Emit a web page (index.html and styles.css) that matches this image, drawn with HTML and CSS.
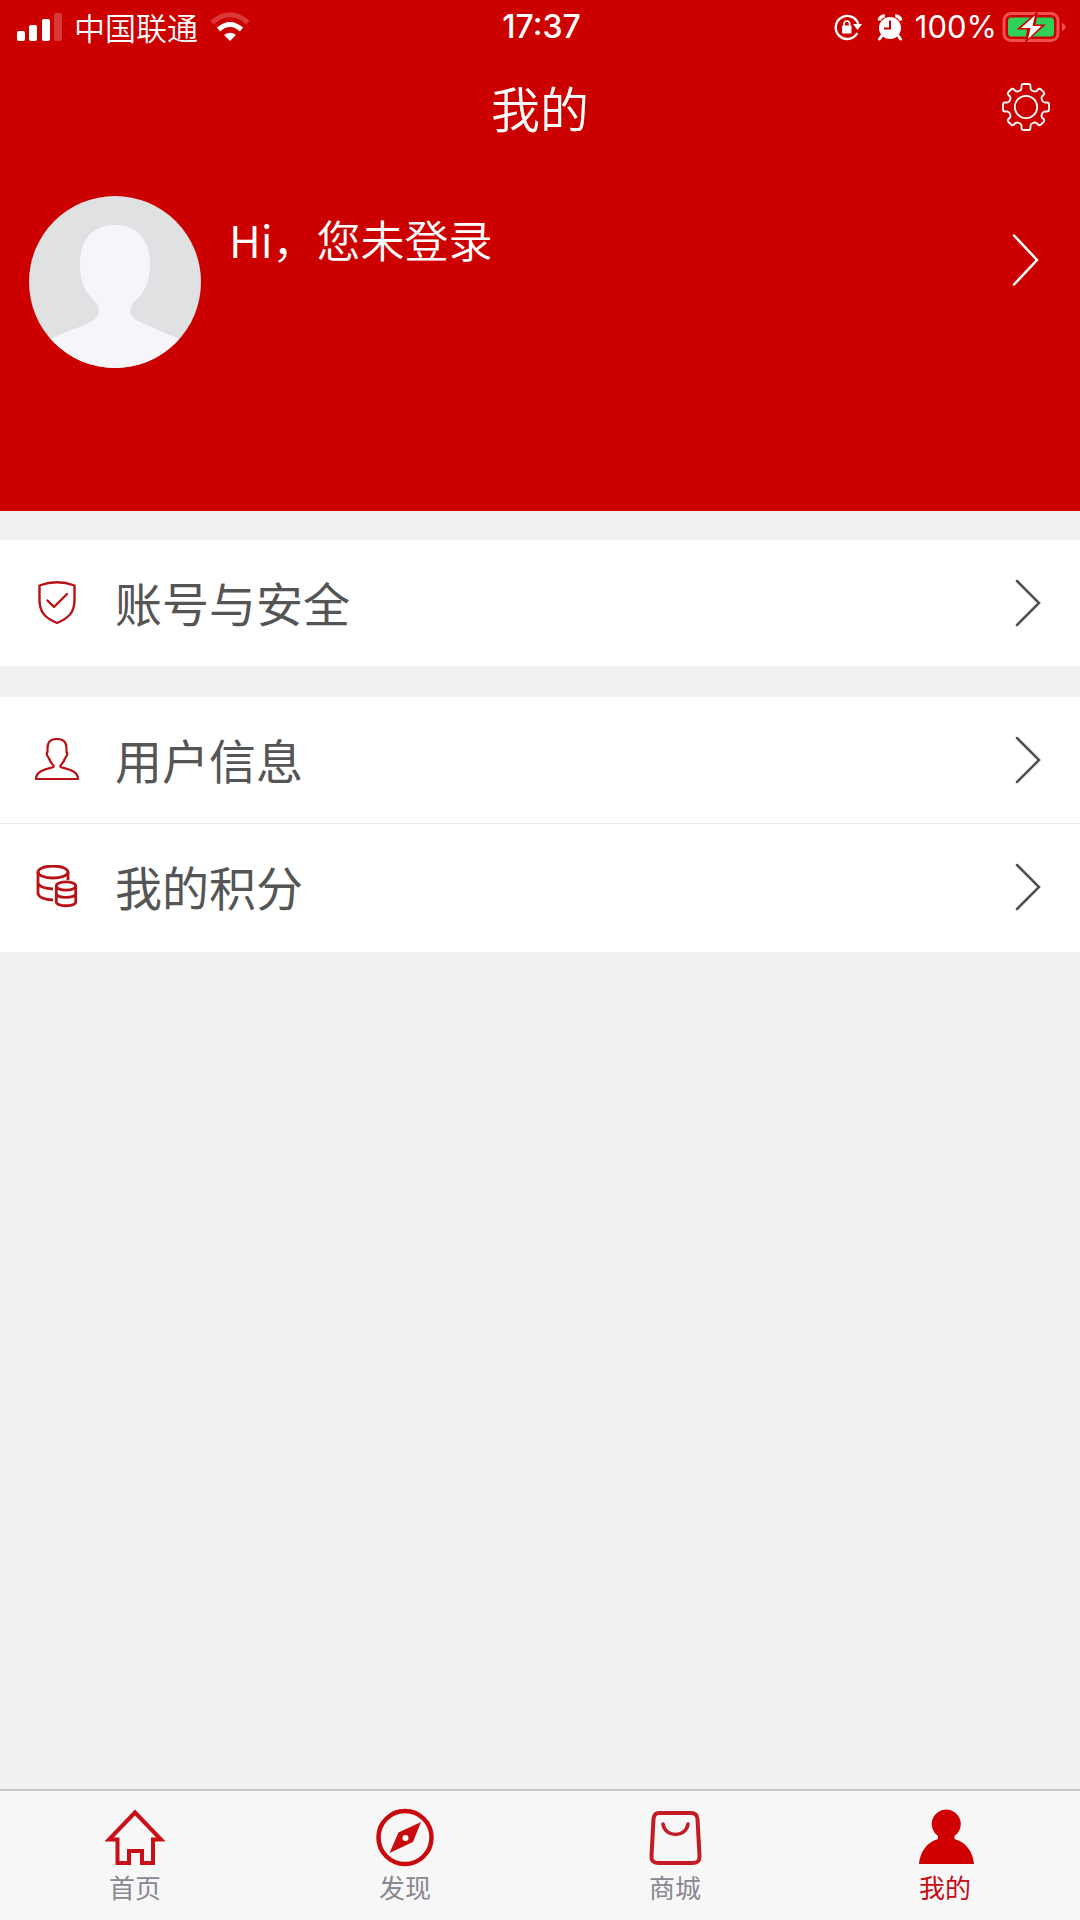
FILE: index.html
```html
<!DOCTYPE html>
<html lang="zh-CN">
<head>
<meta charset="utf-8">
<meta name="viewport" content="width=device-width, initial-scale=1">
<title>我的</title>
<link rel="stylesheet" href="styles.css">
</head>
<body>
<div class="app">
  <header class="header">
    <div class="status">
      <div class="status-left">
        <svg width="45" height="28" viewBox="0 0 45 28" fill="#fff" aria-hidden="true">
          <rect x="0" y="18" width="8" height="10" rx="2"/><rect x="12" y="12" width="8" height="16" rx="2"/><rect x="25" y="6" width="8" height="22" rx="2"/><rect x="37" y="0" width="8" height="28" rx="2" opacity=".22"/>
        </svg>
        <span class="carrier">中国联通</span>
        <svg width="40" height="30" viewBox="0 0 40 30" fill="none" stroke="#fff" stroke-width="5" aria-hidden="true">
          <path d="M2 10.500Q20-5 38 10.500" opacity=".22"/><path d="M8.500 17.500Q20 7.500 31.500 17.500"/><path d="M14 23Q20 18.500 26 23L20 29Z" fill="#fff" stroke="none"/>
        </svg>
      </div>
      <time class="clock">17:37</time>
      <div class="status-right">
        <svg width="29" height="28" viewBox="0 0 29 28" fill="none" stroke="#fff" stroke-width="2.400" aria-hidden="true">
          <path d="M24.300 20A11.500 11.500 0 1 1 25.200 11"/><path d="M20 11h9l-4.500 6z" fill="#fff" stroke="none"/><rect x="9" y="12.500" width="9.500" height="8" rx="1" fill="#fff" stroke="none"/><path d="M11 13v-2.200a2.800 2.800 0 0 1 5.600 0V13" stroke-width="1.700"/>
        </svg>
        <svg class="alarm" width="26" height="28" viewBox="0 0 26 28" aria-hidden="true">
          <circle cx="13" cy="15" r="11" fill="#fff"/><path d="M2.300 7.500a5 5 0 0 1 5.500-4.500M23.700 7.500a5 5 0 0 0-5.500-4.500" stroke="#fff" stroke-width="3.400" fill="none"/><path d="M5 22.500 2.500 26M21 22.500l2.500 3.500" stroke="#fff" stroke-width="3" stroke-linecap="round"/><path d="M13 7.500v8H7" fill="none" stroke="#c00" stroke-width="2"/>
        </svg>
        <span class="percent">100%</span>
        <svg width="64" height="32" viewBox="0 0 64 32" aria-hidden="true">
          <rect x="2" y="2.500" width="54" height="27" rx="7" fill="none" stroke="#f05050" stroke-width="3"/><rect x="6" y="6.500" width="46" height="19" rx="3.500" fill="#30d158"/><path d="M60 12q3.500 1.500 3.500 4t-3.500 4z" fill="#f05050"/><path d="M36 0 14.500 18.500h10.500L23 32 44 13.500H33.500z" fill="#c00"/><path d="M33 4.500 19 17h9.500L26 28 39.500 15H30.500z" fill="#fff"/>
        </svg>
      </div>
    </div>
    <div class="titlebar">
      <h1 class="title">我的</h1>
      <button class="settings" type="button" aria-label="设置">
        <svg width="48" height="48" viewBox="-24 -24 48 48" fill="none" stroke="#fff" stroke-width="1.800" stroke-linejoin="round" aria-hidden="true">
          <circle r="11.200"/>
          <path d="M-4.500-21Q-4.500-23-2.500-23H2.500Q4.500-23 4.500-21V-18.500Q5-16.500 7-16Q9-15 10.500-16L12-17.500Q13.500-19 15-17.500L17.500-15Q19-13.500 17.500-12L16-10.500Q15-9 16-7Q16.500-5 18.500-4.500H21Q23-4.500 23-2.500V2.500Q23 4.500 21 4.500H18.500Q16.500 5 16 7Q15 9 16 10.500L17.500 12Q19 13.500 17.500 15L15 17.500Q13.500 19 12 17.500L10.500 16Q9 15 7 16Q5 16.500 4.500 18.500V21Q4.500 23 2.500 23H-2.500Q-4.500 23-4.500 21V18.500Q-5 16.500-7 16Q-9 15-10.500 16L-12 17.500Q-13.500 19-15 17.500L-17.500 15Q-19 13.500-17.500 12L-16 10.500Q-15 9-16 7Q-16.500 5-18.500 4.500H-21Q-23 4.500-23 2.500V-2.500Q-23-4.500-21-4.500H-18.500Q-16.500-5-16-7Q-15-9-16-10.500L-17.500-12Q-19-13.500-17.500-15L-15-17.500Q-13.500-19-12-17.500L-10.500-16Q-9-15-7-16Q-5-16.500-4.500-18.500Z"/>
        </svg>
      </button>
    </div>
    <a class="profile" href="#login">
      <svg class="avatar" width="172" height="172" viewBox="0 0 172 172" aria-hidden="true">
        <path fill="#dfe1e2" d="M0 0h172v172H0z"/>
        <path fill="#f6f6fa" d="M86 29C107 29 121 42 121 68C121 86 115 97 107 104C101 110 98 117 107 124C120 130 134 136 150 143V172H22V143C36 135 52 132 65 124C72 117 71 110 65 104C56 96 51 86 51 68C51 42 65 29 86 29Z"/>
      </svg>
      <span class="greeting">Hi，您未登录</span>
      <svg class="profile-arrow" width="28" height="54" viewBox="0 0 28 54" fill="none" stroke="#fff" stroke-width="2.500" stroke-linecap="round" aria-hidden="true"><path d="M2 2.500 25 27 2 51.500"/></svg>
    </a>
  </header>

  <main class="main">
    <section class="group">
      <a class="row" href="#security">
        <svg width="44" height="44" viewBox="0 0 44 44" fill="none" stroke="#b81218" stroke-width="2.400" stroke-linejoin="round" stroke-linecap="round" aria-hidden="true"><path d="M4.500 4.500Q22-2 39.500 4.500V19C39.500 31 34 37 22 42C10 37 4.500 31 4.500 19Z"/><path d="M12.500 19.500 19 26 32 13"/></svg>
        <span class="label">账号与安全</span>
        <svg width="26" height="48" viewBox="0 0 26 48" fill="none" stroke="#505050" stroke-width="2.500" stroke-linecap="round" aria-hidden="true"><path d="M2 2 24 24 2 46"/></svg>
      </a>
    </section>
    <section class="group">
      <a class="row" href="#info">
        <svg width="44" height="44" viewBox="0 0 44 44" fill="none" stroke="#b81218" stroke-width="2.200" stroke-linejoin="round" aria-hidden="true"><path d="M22 1C28.500 1 31.500 4 31.500 10V14Q33 16 31.500 18L30 20.500Q28.500 24.500 25.500 27.500V29C31 31 43 32 43 41H1C1 32 13 31 18.500 29V27.500Q15.500 24.500 14 20.500L12.500 18Q11 16 12.500 14V10C12.500 4 15.500 1 22 1Z"/></svg>
        <span class="label">用户信息</span>
        <svg width="26" height="48" viewBox="0 0 26 48" fill="none" stroke="#505050" stroke-width="2.500" stroke-linecap="round" aria-hidden="true"><path d="M2 2 24 24 2 46"/></svg>
      </a>
      <a class="row" href="#points">
        <svg width="44" height="44" viewBox="0 0 44 44" fill="none" stroke="#b81218" stroke-width="2.800" aria-hidden="true"><ellipse cx="18" cy="7" rx="15" ry="6"/><path d="M33 7V15M3 7V29Q5 34.500 18 35M3 18.500Q6 23.500 18 24"/><ellipse cx="31" cy="21" rx="9.700" ry="4.200"/><path d="M21.300 21V37C21.300 42 40.700 42 40.700 37V21M21.300 29C23 33.500 39 33.500 40.700 29"/></svg>
        <span class="label">我的积分</span>
        <svg width="26" height="48" viewBox="0 0 26 48" fill="none" stroke="#505050" stroke-width="2.500" stroke-linecap="round" aria-hidden="true"><path d="M2 2 24 24 2 46"/></svg>
      </a>
    </section>
  </main>

  <nav class="tabs">
    <a class="tab" href="#home">
      <svg width="60" height="60" viewBox="0 0 60 60" fill="none" stroke="#c81018" stroke-width="4" stroke-linejoin="miter" aria-hidden="true"><path d="M30 5.500 56 32.500H48V56H37V44H24V56H12.500V32.500H4Z"/></svg>
      <span>首页</span>
    </a>
    <a class="tab" href="#discover">
      <svg width="60" height="60" viewBox="0 0 60 60" aria-hidden="true"><circle cx="30" cy="30.500" r="26.500" fill="none" stroke="#c80a0e" stroke-width="4.500"/><path d="M46 15 38 35 14.500 46 23.500 25.500Z" fill="#c80a0e"/><circle cx="30.500" cy="31" r="3" fill="#fff"/></svg>
      <span>发现</span>
    </a>
    <a class="tab" href="#mall">
      <svg width="60" height="60" viewBox="0 0 60 60" fill="none" stroke="#c41c24" stroke-width="4" stroke-linecap="round" aria-hidden="true"><path d="M14 6H46Q52 6 52.500 12L54.500 49Q55 56 48 56H13Q6 56 6.500 49L8.500 12Q9 6 14 6Z"/><path d="M18 17C20 31 41 31 43 17" stroke-width="3.600"/></svg>
      <span>商城</span>
    </a>
    <a class="tab tab-active" href="#mine" aria-current="page">
      <svg width="60" height="60" viewBox="0 0 60 60" fill="#d00000" aria-hidden="true"><path d="M31 2.500A14.500 14.500 0 0 1 39.500 29V32C51 35 58 45 59 57H4C5 45 12 35 23 32V29A14.500 14.500 0 0 1 31 2.500Z"/></svg>
      <span>我的</span>
    </a>
  </nav>
</div>
</body>
</html>
```
FILE: styles.css
```css
* { box-sizing: border-box; }

body {
  margin: 0;
  font-family: "Noto Sans CJK SC", sans-serif;
  font-weight: 400;
  background: #f1f1f1;
}

a { color: inherit; text-decoration: none; }
svg { display: block; flex: none; }

.app {
  display: flex;
  flex-direction: column;
  min-height: 100vh;
}

.header {
  background: #cd0000;
  color: #fff;
  padding-bottom: 143px;
}

.status {
  display: grid;
  grid-template-columns: 1fr auto 1fr;
  align-items: center;
  height: 54px;
  padding: 0 14px 0 17px;
}

.status-left { display: flex; align-items: center; gap: 12px; }
.status-right { display: flex; align-items: center; justify-content: flex-end; }
.carrier { font-size: 31px; line-height: 32px; font-weight: 350; }
.clock { font-family: Inter, sans-serif; font-size: 32px; line-height: 32px; font-weight: 500; }
.percent { font-family: Inter, sans-serif; font-size: 31px; line-height: 32px; font-weight: 400; margin: 0 5px 0 12px; }
.alarm { margin-left: 15px; }

.titlebar {
  display: grid;
  grid-template-columns: 1fr auto 1fr;
  align-items: center;
  height: 106px;
  padding: 0 30px;
}

.title { grid-column: 2; margin: 0; font-size: 49px; line-height: 56px; font-weight: 350; }
.settings { justify-self: end; padding: 0; border: 0; background: none; color: inherit; cursor: pointer; }

.profile {
  display: flex;
  align-items: flex-start;
  gap: 28px;
  margin-top: 36px;
  padding: 0 40px 0 29px;
}

.avatar { border-radius: 50%; }
.greeting { flex: 1; margin-top: 15px; font-size: 44px; line-height: 56px; font-weight: 350; }
.profile-arrow { margin-top: 37px; }

.main { flex: 1; padding-top: 29px; }
.group { margin-bottom: 31px; background: #fff; }

.row {
  display: flex;
  align-items: center;
  height: 126px;
  padding: 0 39px 0 35px;
  color: #555;
}
.row + .row { height: 129px; padding-bottom: 2px; border-top: 1px solid #e8e8e8; }
.label { flex: 1; margin-left: 36px; padding-bottom: 2px; font-size: 47px; line-height: 56px; }

.tabs {
  display: grid;
  grid-template-columns: repeat(4, 1fr);
  height: 131px;
  padding-top: 16px;
  border-top: 2px solid #c8c8c8;
  background: #f7f7f7;
}
.tab {
  display: flex;
  flex-direction: column;
  align-items: center;
  gap: 4px;
  color: #888890;
  font-size: 26px;
  line-height: 32px;
}
.tab-active { color: #c80a12; }
```
